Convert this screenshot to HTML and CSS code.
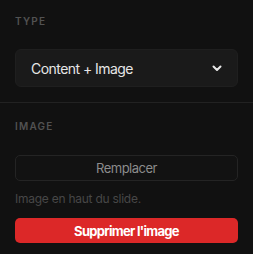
FILE: index.html
```html
<!DOCTYPE html>
<html lang="fr">
<head>
<meta charset="utf-8">
<link rel="stylesheet" href="styles.css">
</head>
<body>
<div class="panel">
  <section class="section section-type">
    <div class="label">TYPE</div>
    <div class="select">
      <span class="select-value">Content + Image</span>
      <svg class="chevron" width="10" height="7" viewBox="0 0 10 7"><path d="M1.5 1.5 L5 5 L8.5 1.5" fill="none" stroke="#e8e8e8" stroke-width="2" stroke-linecap="round" stroke-linejoin="round"/></svg>
    </div>
  </section>
  <div class="divider"></div>
  <section class="section section-image">
    <div class="label">IMAGE</div>
    <button class="btn btn-outline">Remplacer</button>
    <p class="help">Image en haut du slide.</p>
    <button class="btn btn-danger">Supprimer l'image</button>
  </section>
</div>
</body>
</html>
```

FILE: styles.css
```css
* { box-sizing: border-box; }
html, body {
  margin: 0;
  padding: 0;
  background: #111111;
  font-family: Inter, "Noto Sans", sans-serif;
}
.panel {
  width: 253px;
  height: 254px;
  background: #111111;
}
.section {
  display: flex;
  flex-direction: column;
  padding: 0 15px;
}
.section-type { padding-top: 14px; padding-bottom: 15px; }
.section-image { padding-top: 16px; }
.label {
  font-size: 10px;
  line-height: 14px;
  font-weight: 600;
  letter-spacing: 1.2px;
  color: #525252;
}
.select {
  margin-top: 21px;
  height: 38px;
  display: flex;
  align-items: center;
  justify-content: space-between;
  padding: 0 15px 0 15px;
  background: #1a1a1a;
  border: 1px solid #1f1f1f;
  border-radius: 6px;
}
.select-value {
  font-size: 14px;
  letter-spacing: -0.55px;
  color: #e6e6e6;
}
.divider {
  height: 1px;
  background: #222222;
}
.btn {
  font-family: inherit;
  display: block;
  width: 100%;
  border-radius: 5px;
  cursor: pointer;
}
.btn-outline {
  margin-top: 22px;
  height: 26px;
  background: #121212;
  border: 1px solid #242424;
  color: #8c8c8c;
  font-size: 13px;
  letter-spacing: -0.5px;
}
.help {
  margin: 10px 0 0 0;
  font-size: 12px;
  line-height: 16px;
  letter-spacing: -0.25px;
  color: #474747;
}
.btn-danger {
  margin-top: 11px;
  height: 25px;
  background: #dc2828;
  border: none;
  color: #ffffff;
  font-size: 13px;
  font-weight: 700;
  letter-spacing: -0.7px;
}
```
